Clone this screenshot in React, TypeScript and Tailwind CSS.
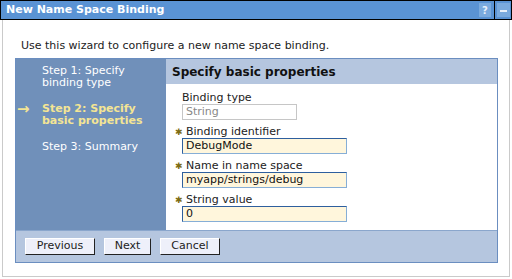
import React from "react"

const font = { fontFamily: '"DejaVu Sans", Verdana, sans-serif' }

function Star() {
  return <span className="w-[6px] text-[9px] leading-none text-[#7d6c12]">✱</span>
}

function Field({ label, value, required, disabled }: { label: string; value: string; required?: boolean; disabled?: boolean }) {
  return (
    <div className="flex flex-col">
      <div className="flex items-center h-[12px] -ml-[7px] gap-[5px]">
        {required ? <Star /> : <span className="w-[2px]" />}
        <span className="text-[11px] text-[#222]">{label}</span>
      </div>
      <div
        className={
          disabled
            ? "h-[16px] w-[115px] border border-[#c6c6c6] bg-white px-[3px] text-[11px] leading-[14px] text-[#888]"
            : "h-[16px] w-[165px] border border-t-[#2e5f9e] border-l-[#2e5f9e] border-b-[#86aed6] border-r-[#86aed6] bg-[#fff6dc] px-[3px] text-[11px] leading-[14px] text-[#111]"
        }
      >
        {value}
      </div>
    </div>
  )
}

function Btn({ children, w }: { children: React.ReactNode; w: string }) {
  return (
    <div className={`${w} h-[17px] flex items-center justify-center bg-[#eef0fa] border border-t-white border-l-white border-b-[#222] border-r-[#222] text-[11px] text-[#222]`}>
      {children}
    </div>
  )
}

export default function App() {
  return (
    <div className="w-[512px] h-[279px] bg-white overflow-hidden" style={font}>
      {/* Title bar */}
      <div className="h-[20px] border border-black bg-[#5a93d4] flex items-stretch">
        <div className="flex-1 flex items-center pl-[5px] text-[11px] font-bold text-white">New Name Space Binding</div>
        <div className="w-[12px] my-[2px] bg-[#7aaade] flex items-center justify-center text-[10px] font-bold text-[#e8f0fa]">?</div>
        <div className="w-[3px]" />
        <div className="w-[1px] bg-black" />
        <div className="w-[16px] flex items-center justify-center">
          <div className="w-[13px] h-[14px] bg-[#7aaade] flex items-center justify-center">
            <div className="w-[7px] h-[2px] bg-[#e8f0fa] mt-[2px]" />
          </div>
        </div>
      </div>

      {/* Body */}
      <div className="mx-[2px] h-[257px] border-x border-b border-[#cacaca] flex flex-col">
        <div className="pt-[19px] pl-[18px] text-[11px] text-[#222] leading-[14px]">Use this wizard to configure a new name space binding.</div>

        <div className="mt-[5px] ml-[12px] w-[483px] h-[205px] border border-[#6b8ec0] flex flex-col">
          <div className="flex flex-1">
            {/* Steps */}
            <div className="w-[150px] bg-[#7090ba] pt-[6px] flex flex-col gap-[14px] text-[11px] leading-[12px]">
              <div className="pl-[26px] text-white">Step 1: Specify<br />binding type</div>
              <div className="flex font-bold text-[#f4e594]">
                <span className="w-[26px] pl-[1px] text-[15px] leading-[12px]">→</span>
                <span>Step 2: Specify<br />basic properties</span>
              </div>
              <div className="pl-[26px] text-white">Step 3: Summary</div>
            </div>
            {/* Main */}
            <div className="flex-1 flex flex-col">
              <div className="h-[25px] bg-[#b5c6df] flex items-center pl-[6px] text-[12px] font-bold text-[#111]">Specify basic properties</div>
              <div className="flex-1 bg-white pl-[16px] pt-[8px] flex flex-col gap-[6px]">
                <Field label="Binding type" value="String" disabled />
                <Field label="Binding identifier" value="DebugMode" required />
                <Field label="Name in name space" value="myapp/strings/debug" required />
                <Field label="String value" value="0" required />
              </div>
            </div>
          </div>
          {/* Buttons */}
          <div className="h-[32px] bg-[#b5c6df] border-t border-[#8aa6cc] flex items-center pl-[9px] gap-[9px]">
            <Btn w="w-[70px]">Previous</Btn>
            <Btn w="w-[47px]">Next</Btn>
            <Btn w="w-[60px]">Cancel</Btn>
          </div>
        </div>
      </div>
    </div>
  )
}
